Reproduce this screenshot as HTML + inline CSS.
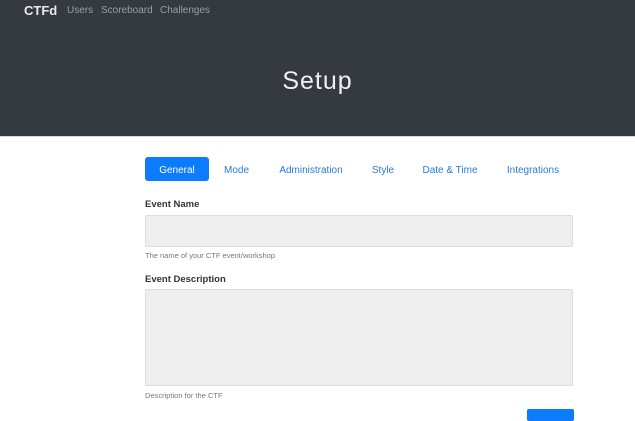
<!DOCTYPE html>
<html><head><style>
*{margin:0;padding:0;box-sizing:border-box}
body{width:635px;height:418px;overflow:hidden;background:#fff;font-family:"Liberation Sans",sans-serif;position:relative}
.hdr{position:absolute;left:0;top:0;width:635px;height:137px;background:#343a40;border-bottom:1px solid #d8d8d8}
.brand{position:absolute;left:24px;top:3px;color:#e8eaec;font-size:13px;font-weight:600}
.nav{position:absolute;top:5px;color:#9a9ea3;font-size:10px}
h1{position:absolute;left:0;width:635px;top:67px;text-align:center;color:#f0f0f0;font-weight:normal;font-size:25px;letter-spacing:1px}
.tab{position:absolute;top:157px;height:24px;line-height:27px;font-size:10px;color:#2a7ad8;text-align:center}
.act{background:#0d7bfe;color:#fff;border-radius:3px}
.lbl{position:absolute;left:145px;font-size:9.5px;font-weight:bold;color:#333}
.box{position:absolute;left:145px;width:428px;background:#eee;border:1px solid #ddd;border-radius:2px}
.hint{position:absolute;left:145px;font-size:7.5px;color:#777}
</style></head><body>
<div class="hdr">
<div class="brand">CTFd</div>
<div class="nav" style="left:67px">Users</div>
<div class="nav" style="left:101px">Scoreboard</div>
<div class="nav" style="left:160px">Challenges</div>
<h1>Setup</h1>
</div>
<div class="tab act" style="left:145px;width:64px">General</div>
<div class="tab" style="left:220px;width:33px">Mode</div>
<div class="tab" style="left:275px;width:72px">Administration</div>
<div class="tab" style="left:367px;width:32px">Style</div>
<div class="tab" style="left:421px;width:58px">Date &amp; Time</div>
<div class="tab" style="left:503px;width:60px">Integrations</div>
<div class="lbl" style="top:199px">Event Name</div>
<div class="box" style="top:215px;height:32px"></div>
<div class="hint" style="top:251px">The name of your CTF event/workshop</div>
<div class="lbl" style="top:274px">Event Description</div>
<div class="box" style="top:289px;height:97px"></div>
<div class="hint" style="top:391px">Description for the CTF</div>
<div style="position:absolute;left:527px;top:409px;width:47px;height:12px;background:#0d7bfe;border-radius:2px"></div>
</body></html>
